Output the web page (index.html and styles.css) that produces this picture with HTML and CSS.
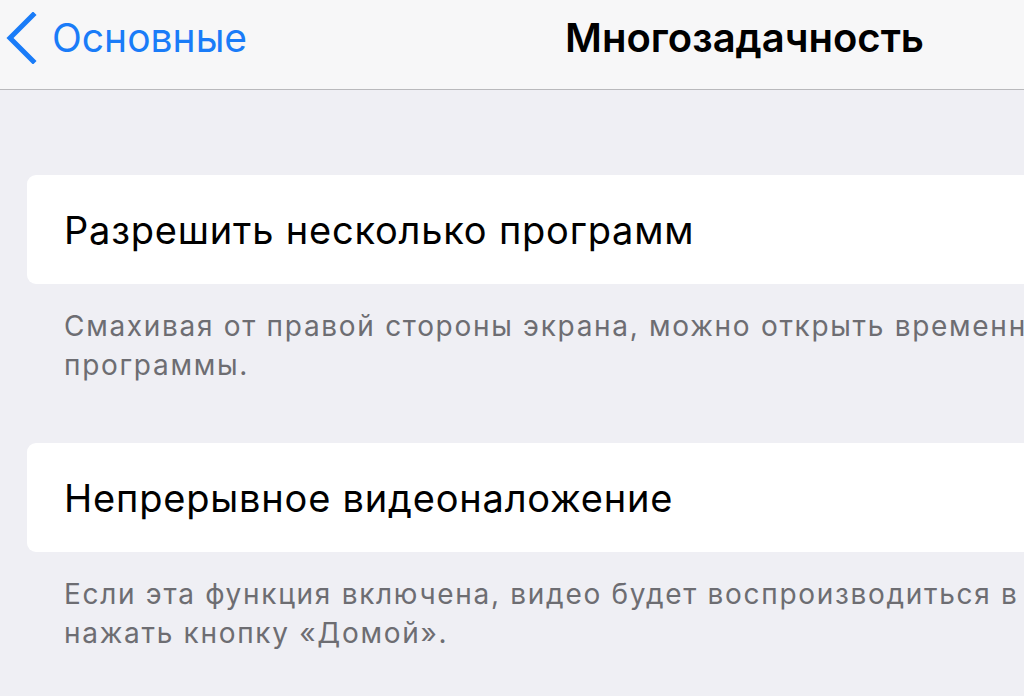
FILE: index.html
```html
<!DOCTYPE html>
<html lang="ru">
<head>
    <meta charset="UTF-8">
    <meta name="viewport" content="width=device-width, initial-scale=1.0">
    <link rel="stylesheet" href="styles.css">
    <title>Многозадачность</title>
</head>
<body>
    <header class="navbar">
        <a class="back" href="#">
            <svg class="chevron" width="32" height="52" viewBox="0 0 32 52">
                <path d="M28 3 L5 26 L28 49" fill="none" stroke="currentColor" stroke-width="5" stroke-linecap="square"/>
            </svg>
            <span class="back-label">Основные</span>
        </a>
        <h1 class="title">Многозадачность</h1>
    </header>

    <main class="content">
        <div class="cell">Разрешить несколько программ</div>
        <p class="footnote">Смахивая от правой стороны экрана, можно открыть временные<br>программы.</p>

        <div class="cell">Непрерывное видеоналожение</div>
        <p class="footnote">Если эта функция включена, видео будет воспроизводиться в<br>нажать кнопку «Домой».</p>
    </main>
</body>
</html>
```

FILE: styles.css
```css
html, body{
    margin: 0;
    padding: 0;
}

body{
    width: 1024px;
    height: 696px;
    overflow: hidden;
    background-color: #efeff4;
    font-family: 'Inter', 'Noto Sans', sans-serif;
    color: #000;
}

.navbar{
    height: 90px;
    box-sizing: border-box;
    display: flex;
    align-items: flex-start;
    justify-content: space-between;
    padding: 12px 100px 0 5px;
    background-color: #f7f7f8;
    border-bottom: 1px solid #b9b9bc;
}

.back{
    display: flex;
    align-items: center;
    gap: 15px;
    color: #1a7cf8;
    text-decoration: none;
}

.chevron{
    display: block;
}

.back-label{
    font-size: 39px;
    line-height: 52px;
}

.title{
    margin: 0;
    font-size: 40px;
    line-height: 52px;
    font-weight: 600;
}

.content{
    width: 1240px;
    padding-top: 85px;
}

.cell{
    height: 109px;
    margin: 0 27px;
    padding-left: 37px;
    display: flex;
    align-items: center;
    background-color: #fff;
    border-radius: 9px;
    font-size: 38px;
    letter-spacing: 0.8px;
}

.footnote{
    margin: 0 0 58px 0;
    padding: 23px 0 0 64px;
    font-size: 28px;
    line-height: 39px;
    letter-spacing: 1.7px;
    color: #6d6d72;
    white-space: nowrap;
}
```
